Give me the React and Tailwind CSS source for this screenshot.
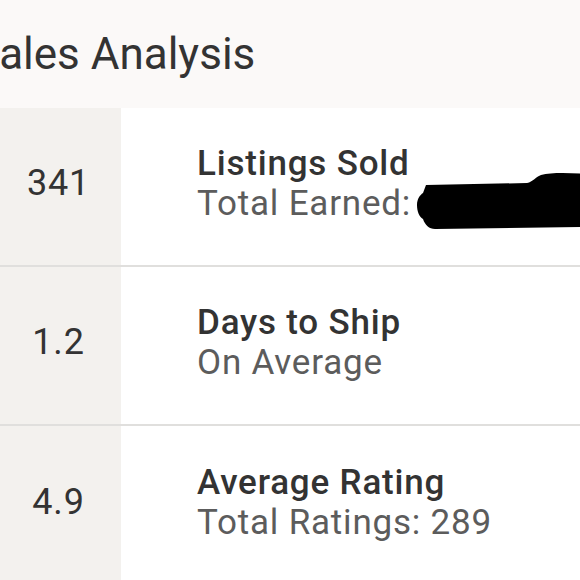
const rows = [
  { value: '341', title: 'Listings Sold', sub: 'Total Earned:', redacted: true },
  { value: '1.2', title: 'Days to Ship', sub: 'On Average' },
  { value: '4.9', title: 'Average Rating', sub: 'Total Ratings: 289' },
]

function Redaction() {
  return (
    <svg
      width="170"
      height="56"
      viewBox="0 0 170 56"
      className="inline-block align-baseline ml-[6px] mb-[-14px] mt-[-20px]"
      aria-hidden="true"
    >
      <path
        d="M9 12 L110 10 C116 9 118 4 124 2 C135 -1 155 0 170 1 L170 54 L18 56 C12 56 8 52 6 46 C2 44 0 38 0 32 C0 26 3 22 6 20 Z"
        fill="#000"
      />
    </svg>
  )
}

export default function App() {
  return (
    <div className="w-[580px] h-[580px] overflow-hidden bg-white font-['Roboto',sans-serif]">
      <div className="h-[108px] bg-[#fbf9f8] pt-[28px]">
        <h2 className="-ml-[27px] text-[44px] leading-[52px] text-[#333] whitespace-nowrap">Sales Analysis</h2>
      </div>
      {rows.map((r, i) => (
        <div
          key={r.value}
          className={`flex h-[159px] ${i < rows.length - 1 ? 'border-b-2 border-[#e0dfdd]' : ''}`}
        >
          <div className="w-[121px] shrink-0 bg-[#f3f1ee] flex items-center justify-center pr-1 pb-[8px] text-[36px] tracking-[0.8px] text-[#333]">
            {r.value}
          </div>
          <div className="min-w-0 flex-1 flex flex-col justify-center pl-[76px] pb-[6px] text-[35px] leading-[40px] tracking-[0.8px] whitespace-nowrap">
            <div className="font-medium text-[#333]">{r.title}</div>
            <div className="text-[#5c5c5c]">
              {r.sub}
              {r.redacted && <Redaction />}
            </div>
          </div>
        </div>
      ))}
    </div>
  )
}
